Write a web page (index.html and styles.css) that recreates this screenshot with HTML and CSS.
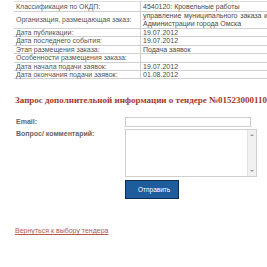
FILE: index.html
```html
<!DOCTYPE html>
<html lang="ru">
<head>
<meta charset="utf-8">
<link rel="stylesheet" href="styles.css">
</head>
<body>
<div class="page">
  <table class="info">
    <tr class="first"><td class="lbl">Классификация по ОКДП:</td><td class="val">4540120: Кровельные работы</td></tr>
    <tr class="tall"><td class="lbl">Организация, размещающая заказ:</td><td class="val"><div class="just">управление муниципального заказа и Администрации города Омска</div></td></tr>
    <tr><td class="lbl">Дата публикации:</td><td class="val">19.07.2012</td></tr>
    <tr><td class="lbl">Дата последнего события:</td><td class="val">19.07.2012</td></tr>
    <tr><td class="lbl">Этап размещения заказа:</td><td class="val">Подача заявок</td></tr>
    <tr><td class="lbl">Особенности размещения заказа:</td><td class="val"></td></tr>
    <tr><td class="lbl">Дата начала подачи заявок:</td><td class="val">19.07.2012</td></tr>
    <tr><td class="lbl">Дата окончания подачи заявок:</td><td class="val">01.08.2012</td></tr>
  </table>

  <h2 class="title">Запрос дополнительной информации о тендере №0152300011012000000</h2>

  <form class="form">
    <label class="flabel">Email:</label>
    <div class="input"></div>
    <label class="flabel">Вопрос/ комментарий:</label>
    <div class="textarea"><div class="scroll"><span class="arr up"></span><span class="arr down"></span></div></div>
    <span></span>
    <button type="button" class="btn">Отправить</button>
  </form>

  <a class="back" href="#">Вернуться к выбору тендера</a>
</div>
</body>
</html>
```
FILE: styles.css
```css
html, body {
  margin: 0;
  padding: 0;
  background: #fff;
  overflow: hidden;
  width: 267px;
  height: 267px;
}
body {
  font-family: "Liberation Sans", Arial, sans-serif;
  font-size: 7px;
  color: #555;
}
.page {
  padding: 1px 0 0 14px;
}
.info {
  border-collapse: collapse;
  width: 290px;
  table-layout: fixed;
  border-top: 1px solid #dcdcdc;
}
.info td {
  border-bottom: 1px solid #cfcfcf;
  padding: 0 0 0 2px;
  height: 7.4px;
  line-height: 7.4px;
  vertical-align: middle;
  white-space: nowrap;
  color: #4a4a4a;
}
.info tr.first td {
  height: 8.5px;
}
.info td.lbl {
  width: 124px;
  color: #555;
}
.info td.val {
  border-left: 1px solid #cfcfcf;
  padding-left: 2px;
}
.info tr.tall td {
  height: 16.5px;
  line-height: 8px;
}
.info .just {
  width: 125px;
  white-space: normal;
  text-align: justify;
}
.title {
  margin: 16px 0 0 1px;
  font-family: "Liberation Serif", "Times New Roman", serif;
  font-size: 9px;
  font-weight: bold;
  color: #a33a2e;
  white-space: nowrap;
  line-height: 10px;
}
.form {
  display: grid;
  grid-template-columns: 109px 132px;
  row-gap: 2px;
  margin-top: 12px;
  padding-left: 2px;
}
.flabel {
  font-weight: bold;
  color: #666;
  font-size: 7px;
  line-height: 9px;
}
.input {
  height: 8px;
  width: 124px;
  border: 1px solid #cfcfcf;
  background: #fff;
}
.textarea {
  height: 46px;
  width: 130px;
  border: 1px solid #cfcfcf;
  display: flex;
  justify-content: flex-end;
}
.scroll {
  width: 8px;
  background: #f0f0f0;
  border-left: 1px solid #e2e2e2;
  position: relative;
}
.arr {
  position: absolute;
  left: 2px;
  width: 0;
  height: 0;
  border-left: 2px solid transparent;
  border-right: 2px solid transparent;
}
.arr.up {
  top: 4px;
  border-bottom: 2px solid #999;
}
.arr.down {
  bottom: 4px;
  border-top: 2px solid #999;
}
.btn {
  margin-top: 1px;
  width: 54px;
  height: 19px;
  background: #1f5c9e;
  border: 1px solid #0d2c4f;
  color: #fff;
  font-family: "Liberation Sans", Arial, sans-serif;
  font-size: 6.5px;
  text-align: left;
  padding: 0 0 0 12px;
}
.back {
  display: inline-block;
  margin: 28px 0 0 1px;
  color: #b5584f;
  font-size: 7px;
  text-decoration: underline;
}
```
